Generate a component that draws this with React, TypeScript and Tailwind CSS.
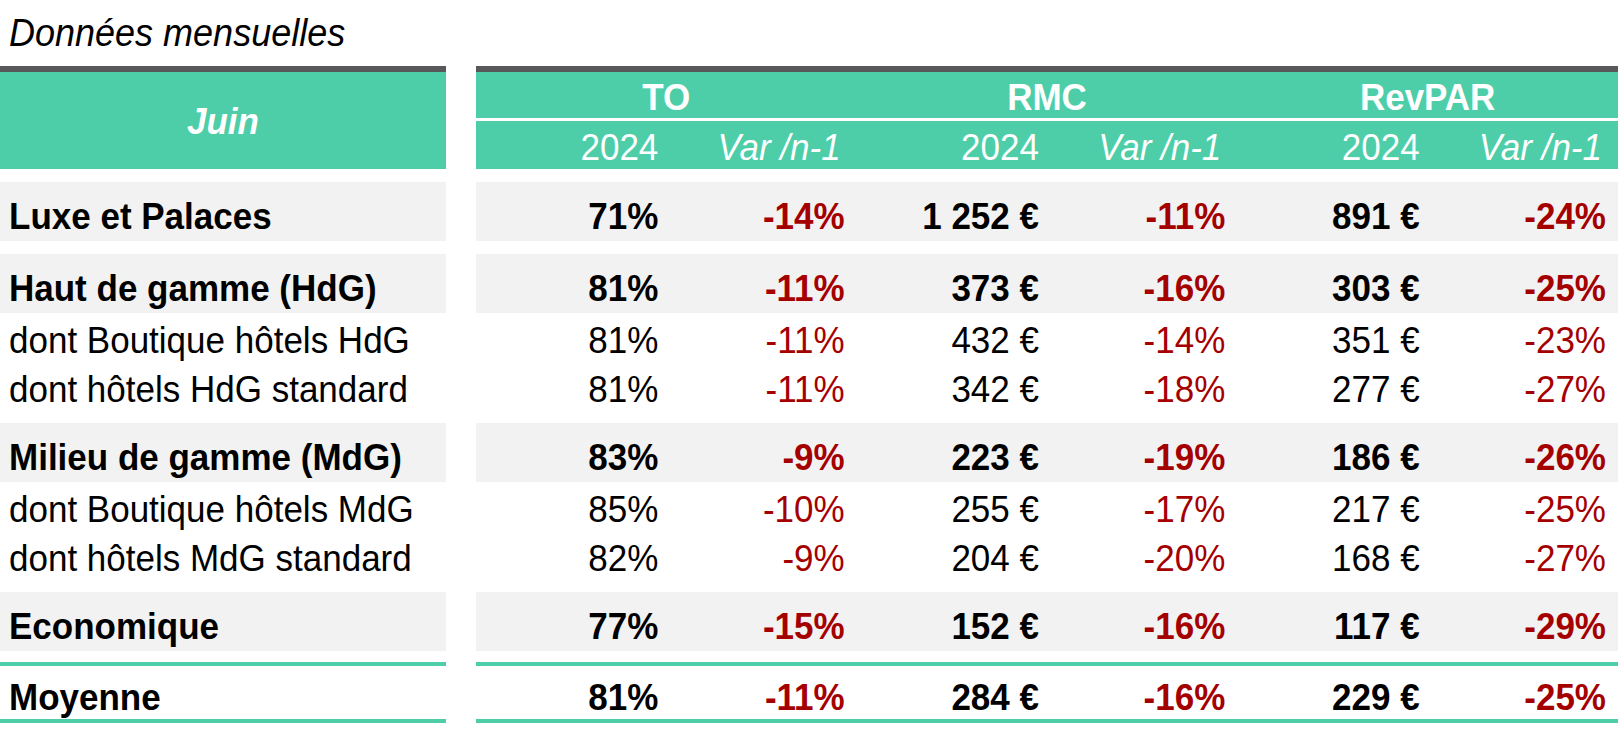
import React from "react";

// Monthly hotel KPIs table (TO / RMC / RevPAR by segment).

type Row = {
  label: string;
  values: [string, string, string, string, string, string];
  bold?: boolean;
  gray?: boolean;
  height: string;
};

const ROWS: (Row | { spacer: string } | { line: true })[] = [
  { spacer: "h-[13px]" },
  {
    label: "Luxe et Palaces",
    values: ["71%", "-14%", "1 252 €", "-11%", "891 €", "-24%"],
    bold: true,
    gray: true,
    height: "h-[59px] pt-[8px]",
  },
  { spacer: "h-[13px]" },
  {
    label: "Haut de gamme (HdG)",
    values: ["81%", "-11%", "373 €", "-16%", "303 €", "-25%"],
    bold: true,
    gray: true,
    height: "h-[59px] pt-[8px]",
  },
  {
    label: "dont Boutique hôtels HdG",
    values: ["81%", "-11%", "432 €", "-14%", "351 €", "-23%"],
    height: "h-[49px] pt-[4px]",
  },
  {
    label: "dont hôtels HdG standard",
    values: ["81%", "-11%", "342 €", "-18%", "277 €", "-27%"],
    height: "h-[49px] pt-[4px]",
  },
  { spacer: "h-[12px]" },
  {
    label: "Milieu de gamme (MdG)",
    values: ["83%", "-9%", "223 €", "-19%", "186 €", "-26%"],
    bold: true,
    gray: true,
    height: "h-[59px] pt-[8px]",
  },
  {
    label: "dont Boutique hôtels MdG",
    values: ["85%", "-10%", "255 €", "-17%", "217 €", "-25%"],
    height: "h-[49px] pt-[4px]",
  },
  {
    label: "dont hôtels MdG standard",
    values: ["82%", "-9%", "204 €", "-20%", "168 €", "-27%"],
    height: "h-[49px] pt-[4px]",
  },
  { spacer: "h-[12px]" },
  {
    label: "Economique",
    values: ["77%", "-15%", "152 €", "-16%", "117 €", "-29%"],
    bold: true,
    gray: true,
    height: "h-[59px] pt-[8px]",
  },
  { spacer: "h-[11px]" },
  { line: true },
  {
    label: "Moyenne",
    values: ["81%", "-11%", "284 €", "-16%", "229 €", "-25%"],
    bold: true,
    height: "h-[53px] pt-[8px]",
  },
  { line: true },
];

function T({ children }: { children: React.ReactNode }) {
  return <span className="inline-block scale-y-[1.08] whitespace-nowrap">{children}</span>;
}

function GreenLine() {
  return (
    <div className="flex gap-[30px]">
      <div className="h-[4px] w-[446px] bg-[#4dcea8]" />
      <div className="h-[4px] flex-1 bg-[#4dcea8]" />
    </div>
  );
}

function DataRow({ row }: { row: Row }) {
  const bg = row.gray ? "bg-[#f2f2f2]" : "bg-white";
  const weight = row.bold ? "font-bold" : "font-normal";
  return (
    <div className={`flex gap-[30px] ${weight}`}>
      <div className={`flex w-[446px] items-center pl-[9px] pr-[1px] text-black ${row.height} ${bg}`}>
        <T>{row.label}</T>
      </div>
      <div className={`grid flex-1 grid-cols-6 items-center ${row.height} ${bg}`}>
        {row.values.map((v, i) => (
          <div
            key={i}
            className={`text-right ${
              i % 2 === 0 ? "pr-[8px] text-black" : "pr-[12px] text-[#a50000]"
            }`}
          >
            <T>{v}</T>
          </div>
        ))}
      </div>
    </div>
  );
}

export default function App() {
  return (
    <div className="h-[736px] w-[1618px] overflow-hidden bg-white font-['Liberation_Sans',Arial,sans-serif] text-[35px] leading-none">
      <div className="flex h-[66px] items-center pl-[9px] text-[36px] italic text-black">
        <T>Données mensuelles</T>
      </div>

      {/* Header */}
      <div className="flex gap-[30px] text-white">
        <div className="flex h-[103px] w-[446px] items-center justify-center border-t-[6px] border-[#58585b] bg-[#4dcea8] font-bold italic">
          <T>Juin</T>
        </div>
        <div className="flex-1 border-t-[6px] border-[#58585b]">
          <div className="grid h-[46px] grid-cols-3 items-center bg-[#4dcea8] pt-[2px] font-bold">
            <div className="text-center"><T>TO</T></div>
            <div className="text-center"><T>RMC</T></div>
            <div className="text-center"><T>RevPAR</T></div>
          </div>
          <div className="h-[3px] bg-white" />
          <div className="grid h-[48px] grid-cols-6 items-center bg-[#4dcea8] pt-[2px]">
            {["TO", "RMC", "RevPAR"].map((g) => (
              <React.Fragment key={g}>
                <div className="pr-[8px] text-right"><T>2024</T></div>
                <div className="pr-[16px] text-right italic"><T>Var /n-1</T></div>
              </React.Fragment>
            ))}
          </div>
        </div>
      </div>

      {ROWS.map((r, i) =>
        "spacer" in r ? (
          <div key={i} className={r.spacer} />
        ) : "line" in r ? (
          <GreenLine key={i} />
        ) : (
          <DataRow key={i} row={r} />
        ),
      )}
    </div>
  );
}
